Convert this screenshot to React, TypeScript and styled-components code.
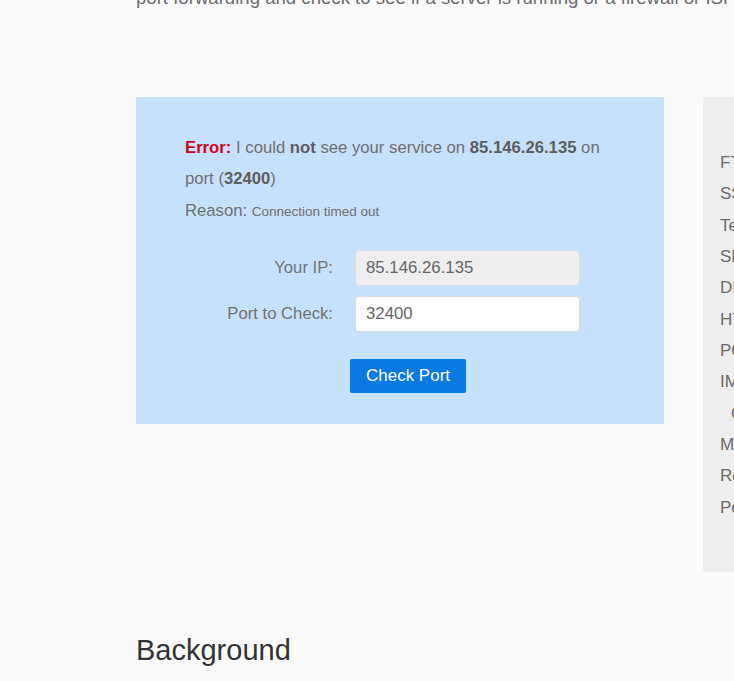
import React from "react";
import styled, { createGlobalStyle } from "styled-components";

const GlobalStyle = createGlobalStyle`
  html, body {
    margin: 0;
    padding: 0;
    background: #fafafa;
    overflow: hidden;
  }
  body {
    font-family: "Liberation Sans", Arial, sans-serif;
    color: #666;
  }
`;

const Page = styled.div`
  width: 1100px;
  padding-left: 136px;
`;

const Intro = styled.p`
  margin: -16px 0 0;
  font-size: 18.6px;
  line-height: 28.8px;
  color: #6b6b6b;
  white-space: nowrap;
`;

const Row = styled.div`
  display: flex;
  align-items: flex-start;
  gap: 39px;
  margin-top: 84px;
`;

const Checker = styled.div`
  width: 528px;
  box-sizing: border-box;
  background: #c6e1fb;
  padding: 35px 49px 31px;
  font-size: 16.7px;
  line-height: 31.4px;
  color: #6f6f6f;
`;

const Message = styled.p`
  margin: 0;
`;

const ErrorLabel = styled.strong`
  color: #d0021b;
`;

const Strong = styled.strong`
  color: #5d5d5d;
`;

const Small = styled.span`
  font-size: 13.5px;
`;

const Form = styled.div`
  display: grid;
  grid-template-columns: 148px 225px;
  column-gap: 22px;
  row-gap: 10px;
  margin-top: 23px;
  align-items: center;
`;

const Label = styled.label`
  text-align: right;
  font-size: 16.7px;
  color: #737373;
`;

const Input = styled.input<{ $locked?: boolean }>`
  box-sizing: border-box;
  height: 36px;
  width: 225px;
  padding: 0 10px;
  border: 1px solid #d6dde4;
  border-radius: 4px;
  background: ${(p) => (p.$locked ? "#eeeeee" : "#ffffff")};
  font-family: "Liberation Sans", Arial, sans-serif;
  font-size: 16.8px;
  color: #666;
  outline: none;
`;

const ButtonRow = styled.div`
  padding-left: 165px;
  margin-top: 27px;
  line-height: 0;
`;

const Button = styled.button`
  height: 34px;
  width: 116px;
  padding: 0;
  border: none;
  border-radius: 2px;
  background: #0a79e1;
  color: #fff;
  font-family: "Liberation Sans", Arial, sans-serif;
  font-size: 17px;
  cursor: pointer;
`;

const Sidebar = styled.aside`
  width: 260px;
  box-sizing: border-box;
  background: #eeeeee;
  padding: 50px 17px 49px;
`;

const List = styled.ul`
  list-style: none;
  margin: 0;
  padding: 0;
  font-size: 17px;
  line-height: 31.36px;
  color: #6a6a6a;
`;

const Item = styled.li`
  padding-left: 11px;
  text-indent: -11px;
`;

const Heading = styled.h2`
  margin: 61px 0 0;
  font-size: 29px;
  line-height: 34.8px;
  font-weight: normal;
  color: #333;
`;

const services = ["FTP", "SSH", "Telnet", "SMTP", "DNS", "HTTP", "POP3"];
const more = ["MySQL", "Remote Desktop", "PostgreSQL"];

export default function App() {
  return (
    <>
      <GlobalStyle />
      <Page>
        <Intro>
          port forwarding and check to see if a server is running or a firewall or ISP is blocking certain ports.
        </Intro>
        <Row>
          <Checker>
            <Message>
              <ErrorLabel>Error:</ErrorLabel> I could <Strong>not</Strong> see
              your service on <Strong>85.146.26.135</Strong> on port (
              <Strong>32400</Strong>)
            </Message>
            <Message>
              Reason: <Small>Connection timed out</Small>
            </Message>
            <Form>
              <Label>Your IP:</Label>
              <Input $locked readOnly value="85.146.26.135" />
              <Label>Port to Check:</Label>
              <Input defaultValue="32400" />
            </Form>
            <ButtonRow>
              <Button>Check Port</Button>
            </ButtonRow>
          </Checker>
          <Sidebar>
            <List>
              {services.map((s) => (
                <Item key={s}>{s}</Item>
              ))}
              <Item>
                IMAP
                <br />
                Courier
              </Item>
              {more.map((s) => (
                <Item key={s}>{s}</Item>
              ))}
            </List>
          </Sidebar>
        </Row>
        <Heading>Background</Heading>
      </Page>
    </>
  );
}
